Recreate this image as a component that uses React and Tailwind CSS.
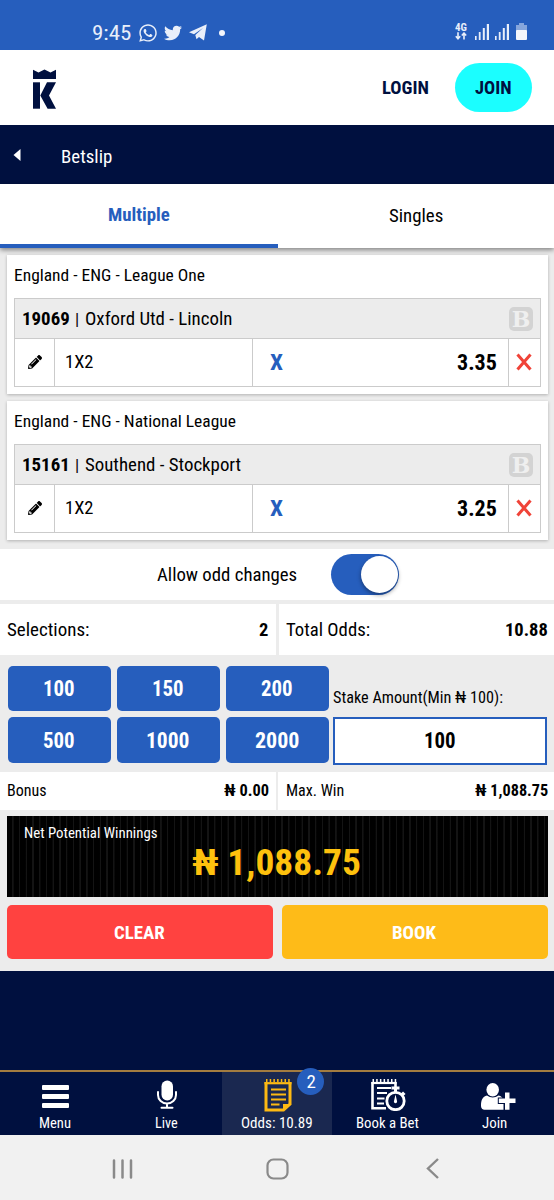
import React, { useLayoutEffect, useRef } from 'react'
import { FaWhatsapp, FaTwitter, FaPencilAlt } from 'react-icons/fa'

// Condensed label: the glyphs are squeezed to the width the label should take
function T({ w, className = '', children }) {
  const ref = useRef(null)
  useLayoutEffect(() => {
    const el = ref.current
    el.style.transform = `scaleX(${w / el.offsetWidth})`
  }, [w, children])
  return (
    <span className="flex items-center whitespace-nowrap" style={{ width: w }}>
      <span ref={ref} className={`inline-block origin-left ${className}`}>{children}</span>
    </span>
  )
}

const bets = [
  { league: 'England - ENG - League One', leagueW: 191, code: '19069', match: 'Oxford Utd - Lincoln', matchW: 147, odd: '3.35' },
  { league: 'England - ENG - National League', leagueW: 222, code: '15161', match: 'Southend - Stockport', matchW: 156, odd: '3.25' },
]

const stakes = [
  { v: '100', w: 32 },
  { v: '150', w: 32 },
  { v: '200', w: 32 },
  { v: '500', w: 32 },
  { v: '1000', w: 43 },
  { v: '2000', w: 44 },
]

function Signal() {
  return (
    <svg width="16" height="17" viewBox="0 0 16 17" fill="#e9effa">
      <rect x="1" y="13" width="1.6" height="4" />
      <rect x="4.8" y="9" width="1.8" height="8" />
      <rect x="8.8" y="5" width="2" height="12" />
      <rect x="12.8" y="1" width="2.2" height="16" />
    </svg>
  )
}

function StatusBar() {
  return (
    <div className="flex h-[50px] items-end justify-between bg-[#265ebd] pl-[92px] pr-[27px] text-[#e9effa]">
      <div className="flex h-[35px] items-center">
        <T w={39} className="text-[20px] font-stretch-normal">9:45</T>
        <FaWhatsapp className="ml-[7px] size-[20px]" />
        <FaTwitter className="ml-[6px] size-[18px]" />
        <svg className="ml-[7px]" width="18" height="17" viewBox="0 0 18 17" fill="currentColor">
          <path d="M0 8.300L17.800 0.300 15 16.500 10 13 7.500 15.300 6.300 11 14 4 5 10.200z" />
        </svg>
        <span className="ml-[12px] size-[6px] rounded-full bg-[#f4f6fb]" />
      </div>
      <div className="flex h-[27px] items-start">
        <div className="mr-[7px] flex w-[12px] flex-col items-center">
          <T w={12} className="text-[10px] leading-[9px] font-bold">4G</T>
          <svg width="12" height="8" viewBox="0 0 12 8" fill="none" stroke="#e9effa" strokeWidth="1.6">
            <path d="M3 0.3v6M0.8 4.3L3 6.7l2.2-2.4M9 7.5v-6M6.8 3.5L9 1.1l2.2 2.4" />
          </svg>
        </div>
        <Signal />
        <span className="w-[4px]" />
        <Signal />
        <svg className="ml-[6px]" width="11" height="17" viewBox="0 0 11 17">
          <path d="M3 0h5v2h3v6H0V2h3z" fill="#86a6dc" />
          <rect y="7" width="11" height="10" rx="1" fill="#f4f6fb" />
        </svg>
      </div>
    </div>
  )
}

function Header() {
  return (
    <div className="flex h-[75px] items-center bg-white text-[#00103f]">
      <svg className="ml-[33px] mt-[2px]" width="24" height="40" viewBox="0 0 24 40" fill="#00103f">
        <path d="M0 0.700l5.500 2.800L11.500 0.500l6 3 5.500-2.800V10H0z" />
        <path d="M0 13.300h7v26.400H0z" />
        <path d="M7.300 26.500L14 13.300h9L16 26.500 23 39.700h-8.400z" />
      </svg>
      <div className="ml-auto mr-[26px] pt-[1px]"><T w={47} className="text-[19px] font-bold">LOGIN</T></div>
      <div className="mr-[22px] flex h-[49px] w-[77px] items-center justify-center rounded-full bg-[#1bfeff] pt-[1px]">
        <T w={37} className="text-[19px] font-bold">JOIN</T>
      </div>
    </div>
  )
}

function BetCard({ bet }) {
  return (
    <div className="ml-[7px] mr-[6px] h-[139px] bg-white px-[7px] shadow-[0_1px_3px_rgba(0,0,0,0.25)]">
      <div className="flex h-[43px] items-center pb-[2px]">
        <T w={bet.leagueW} className="text-[17px]">{bet.league}</T>
      </div>
      <div className="h-[89px] border border-[#cbcbcb]">
        <div className="flex h-[40px] items-center border-b border-[#cbcbcb] bg-[#ececec] pl-[7px] pr-[7px]">
          <div className="flex items-center pt-[2px]">
            <T w={48} className="text-[18.500px] font-bold">{bet.code}</T>
            <span className="ml-[5px] w-[10px] text-[17px]">|</span>
            <T w={bet.matchW} className="text-[18.500px]">{bet.match}</T>
          </div>
          <span className="ml-auto flex size-[24px] items-center justify-center rounded-[5px] bg-[#d3d3d3] font-['DejaVu_Serif',serif] text-[22px] leading-none font-bold font-stretch-normal text-[#efefef]">B</span>
        </div>
        <div className="flex h-[47px] items-stretch">
          <div className="flex w-[40px] items-center justify-center border-r border-[#cbcbcb] pb-[1px]">
            <FaPencilAlt className="size-[14px]" />
          </div>
          <div className="flex w-[198px] items-center border-r border-[#cbcbcb] pl-[10px] pt-[1px]">
            <T w={28} className="text-[18.500px]">1X2</T>
          </div>
          <div className="flex flex-1 items-center justify-between pl-[17px] pr-[11px] pt-[1px]">
            <T w={13} className="text-[21.500px] font-bold text-[#265ebd]">X</T>
            <T w={40} className="text-[21.500px] font-bold">{bet.odd}</T>
          </div>
          <div className="flex w-[32px] items-center justify-center border-l border-[#cbcbcb] pr-[1px] pb-[1px]">
            <svg width="16" height="18" viewBox="0 0 16 18" stroke="#f04338" strokeWidth="3">
              <path d="M1.500 1.500l13 15M14.500 1.500l-13 15" />
            </svg>
          </div>
        </div>
      </div>
    </div>
  )
}

function NavItem({ icon, label, w, active, badge, shift }) {
  return (
    <div className={`relative flex flex-1 flex-col items-center ${active ? 'bg-[#1a2850]' : ''}`}>
      <div className="flex h-[41px] items-end justify-center">{icon}</div>
      <div className={`flex h-[21px] items-center ${shift ? 'mr-[8px]' : ''}`}>
        <T w={w} className="text-[15.500px]">{label}</T>
      </div>
      {badge && (
        <span className="absolute -top-[4px] right-[8px] flex size-[27px] items-center justify-center rounded-full bg-[#265ebd] pt-[1px]">
          <T w={9} className="text-[19px]">{badge}</T>
        </span>
      )}
    </div>
  )
}

const menuIcon = (
  <svg className="mb-[5px]" width="27" height="23" viewBox="0 0 27 23" fill="#fff">
    <rect width="27" height="5" rx="1" />
    <rect y="9" width="27" height="5" rx="1" />
    <rect y="18" width="27" height="5" rx="1" />
  </svg>
)

const micIcon = (
  <svg className="mb-[4px] ml-[1px]" width="20" height="29" viewBox="0 0 20 29" fill="none" stroke="#fff" strokeWidth="2">
    <rect x="4.500" y="0.500" width="11.500" height="20" rx="5.700" fill="#fff" stroke="none" />
    <path d="M1 12v3a9 8.500 0 0 0 18 0v-3M10 23.500v4M4.500 27.800h11" strokeLinecap="round" />
  </svg>
)

const slipIcon = (
  <svg className="mb-[1px] ml-[2px]" width="28" height="33" viewBox="0 0 28 33" fill="none" stroke="#fdb913" strokeWidth="2">
    <path d="M2 3v28h17.500l6.500-6V3" strokeWidth="3" />
    <path d="M0.500 4.200h27" strokeWidth="2.200" />
    <path d="M2 1.500h25" strokeWidth="3" strokeDasharray="1.500 2.200" />
    <path d="M7 10.500h15M7 15.500h15M7 20.500h15M7 25.500h8.500" />
    <path d="M19 32v-7h8.500z" fill="#fdb913" stroke="none" />
  </svg>
)

const bookIcon = (
  <svg className="mb-[2px] ml-[1px]" width="35" height="32" viewBox="0 0 35 32" fill="none" stroke="#fff" strokeWidth="2.200">
    <path d="M24.500 8V3M1.500 3v26.300H15" strokeWidth="2.600" />
    <path d="M0.500 4h25" />
    <path d="M1.500 1.500h24" strokeWidth="3" strokeDasharray="1.500 2.200" />
    <path d="M6 9h14M6 14h10M6 19.500h7.500M6 24.500h7" />
    <circle cx="24.500" cy="22" r="8.700" strokeWidth="2.800" />
    <path d="M20.500 9h8M24.500 8v6M31 13.500l2.500 2.500" strokeWidth="3" />
    <path d="M24.500 15.500l1.500 6.500a1.600 1.600 0 1 1-3 0z" fill="#fff" stroke="none" />
  </svg>
)

const joinIcon = (
  <svg className="mb-[3px]" width="35" height="27" viewBox="0 0 35 27" fill="#fff">
    <ellipse cx="11.700" cy="6.800" rx="6.300" ry="6.700" />
    <path d="M0 23c0-6 1.500-9.500 6-10.500 3.500 2.500 8 2.500 11.500 0 2.500 0.500 4 2 5 4.500v9.700H3.500c-2 0-3.500-1.500-3.500-3.700z" />
    <path
      d="M24 9.500h4.500v6h6V20h-6v6.800H24V20h-6.200v-4.500H24z"
      stroke="#00103f"
      strokeWidth="2"
      paintOrder="stroke"
    />
  </svg>
)

export default function App() {
  return (
    <div className="flex h-[1200px] w-[554px] flex-col overflow-hidden bg-[#00103f] font-['Roboto_Condensed','Roboto',sans-serif] font-stretch-condensed text-black">
      <StatusBar />
      <Header />

      <div className="flex h-[59px] items-center bg-[#00103f] pt-[4px] text-white">
        <svg className="-mt-[4px] ml-[13px]" width="8" height="12" viewBox="0 0 8 12" fill="#fff">
          <path d="M7.500 0v12L0.500 6z" />
        </svg>
        <div className="ml-[40px] pt-[2px]"><T w={51} className="text-[18.500px]">Betslip</T></div>
      </div>

      <div className="relative flex h-[64px] bg-white shadow-[0_2px_5px_rgba(0,0,0,0.45)]">
        <div className="flex w-[278px] items-center justify-center border-b-4 border-[#265ebd] pt-[3px] text-[#265ebd]">
          <T w={62} className="text-[18.500px] font-bold">Multiple</T>
        </div>
        <div className="flex flex-1 items-center justify-center pt-[2px]">
          <T w={54} className="text-[18.500px]">Singles</T>
        </div>
      </div>

      <div className="h-[723px] bg-[#ececec]">
        <div className="flex flex-col gap-[7px] pt-[7px]">
          {bets.map((bet) => (
            <BetCard key={bet.code} bet={bet} />
          ))}
        </div>

        <div className="mt-[9px] flex h-[51px] items-center bg-white pl-[157px]">
          <div className="pt-[2px]"><T w={140} className="text-[18.500px]">Allow odd changes</T></div>
          <div className="ml-[34px] flex h-[41px] w-[68px] items-center justify-end rounded-full bg-[#265ebd] pr-[1px] pb-[1px]">
            <span className="size-[37px] rounded-full bg-white shadow-[0_2px_4px_rgba(0,0,0,0.4)]" />
          </div>
        </div>

        <div className="mt-[4px] flex h-[51px] gap-[3px]">
          <div className="flex w-[276px] items-center justify-between bg-white pl-[7px] pr-[8px] pt-[2px]">
            <T w={82} className="text-[18.500px]">Selections:</T>
            <T w={9} className="text-[18.500px] font-bold">2</T>
          </div>
          <div className="flex flex-1 items-center justify-between bg-white pl-[7px] pr-[6px] pt-[2px]">
            <T w={84} className="text-[18.500px]">Total Odds:</T>
            <T w={43} className="text-[18.500px] font-bold">10.88</T>
          </div>
        </div>

        <div className="flex h-[117px] pl-[8px] pt-[11px]">
          <div className="grid w-[321px] grid-cols-3 grid-rows-[45px_46px] gap-[6px]">
            {stakes.map((s) => (
              <button key={s.v} className="flex items-center justify-center rounded-[5px] bg-[#265ebd] pt-[2px] pr-[2px] font-bold text-white">
                <T w={s.w} className="text-[21.500px]">{s.v}</T>
              </button>
            ))}
          </div>
          <div className="ml-[4px] w-[214px]">
            <div className="flex h-[51px] items-end pb-[7px]">
              <T w={170} className="text-[16px]">Stake Amount(Min ₦ 100):</T>
            </div>
            <div className="flex h-[48px] items-center justify-center border-2 border-[#265ebd] bg-white">
              <T w={32} className="text-[21.500px] font-bold">100</T>
            </div>
          </div>
        </div>

        <div className="flex h-[38px] gap-[2px]">
          <div className="flex w-[276px] items-center justify-between bg-white pl-[7px] pr-[7px]">
            <T w={40} className="text-[16px]">Bonus</T>
            <T w={45} className="text-[16px] font-bold">₦ 0.00</T>
          </div>
          <div className="flex flex-1 items-center justify-between bg-white pl-[8px] pr-[6px]">
            <T w={58} className="text-[16px]">Max. Win</T>
            <T w={73} className="text-[16px] font-bold">₦ 1,088.75</T>
          </div>
        </div>

        <div className="ml-[7px] mr-[6px] mt-[6px] flex h-[81px] flex-col bg-[repeating-linear-gradient(90deg,#000_0px,#000_5px,#141414_5.300px,#141414_6.400px,#000_6.730px)] pt-[8px]">
          <div className="flex h-[18px] items-center pt-[2px] pl-[17px]">
            <T w={134} className="text-[15.500px] text-white">Net Potential Winnings</T>
          </div>
          <div className="flex h-[42px] items-center justify-center pr-[2px]">
            <T w={169} className="text-[37px] font-bold text-[#fec10d]">₦ 1,088.75</T>
          </div>
        </div>

        <div className="mt-[8px] flex h-[54px] gap-[9px] pl-[7px] pr-[6px]">
          <button className="flex flex-1 items-center justify-center rounded-[5px] bg-[#ff4240] pt-[3px] pr-[2px] text-white">
            <T w={51} className="text-[18.500px] font-bold">CLEAR</T>
          </button>
          <button className="flex flex-1 items-center justify-center rounded-[5px] bg-[#febb18] pt-[3px] pr-[2px] text-white">
            <T w={44} className="text-[18.500px] font-bold">BOOK</T>
          </button>
        </div>
      </div>

      <div className="mt-auto flex h-[65px] border-t-2 border-[#a37c40] bg-[#00103f] text-white">
        <NavItem icon={menuIcon} label="Menu" w={32} />
        <NavItem icon={micIcon} label="Live" w={23} />
        <NavItem icon={slipIcon} label="Odds: 10.89" w={72} active badge="2" />
        <NavItem icon={bookIcon} label="Book a Bet" w={63} />
        <NavItem icon={joinIcon} label="Join" w={25} shift />
      </div>

      <div className="flex h-[65px] items-center bg-[#f1f1f1] pt-[2px] text-[#8a8a8a]">
        <svg className="ml-[112px]" width="21" height="20" viewBox="0 0 21 20" stroke="currentColor" strokeWidth="2.500" strokeLinecap="round">
          <path d="M2 1.500v17M10.500 1.500v17M19 1.500v17" />
        </svg>
        <svg className="ml-[133px]" width="23" height="22" viewBox="0 0 23 22" fill="none" stroke="currentColor" strokeWidth="2.200">
          <rect x="1.500" y="1.500" width="20" height="19" rx="6" />
        </svg>
        <svg className="ml-[137px]" width="13" height="21" viewBox="0 0 13 21" fill="none" stroke="currentColor" strokeWidth="2.400">
          <path d="M12 1L2 10.500 12 20" />
        </svg>
      </div>
    </div>
  )
}
